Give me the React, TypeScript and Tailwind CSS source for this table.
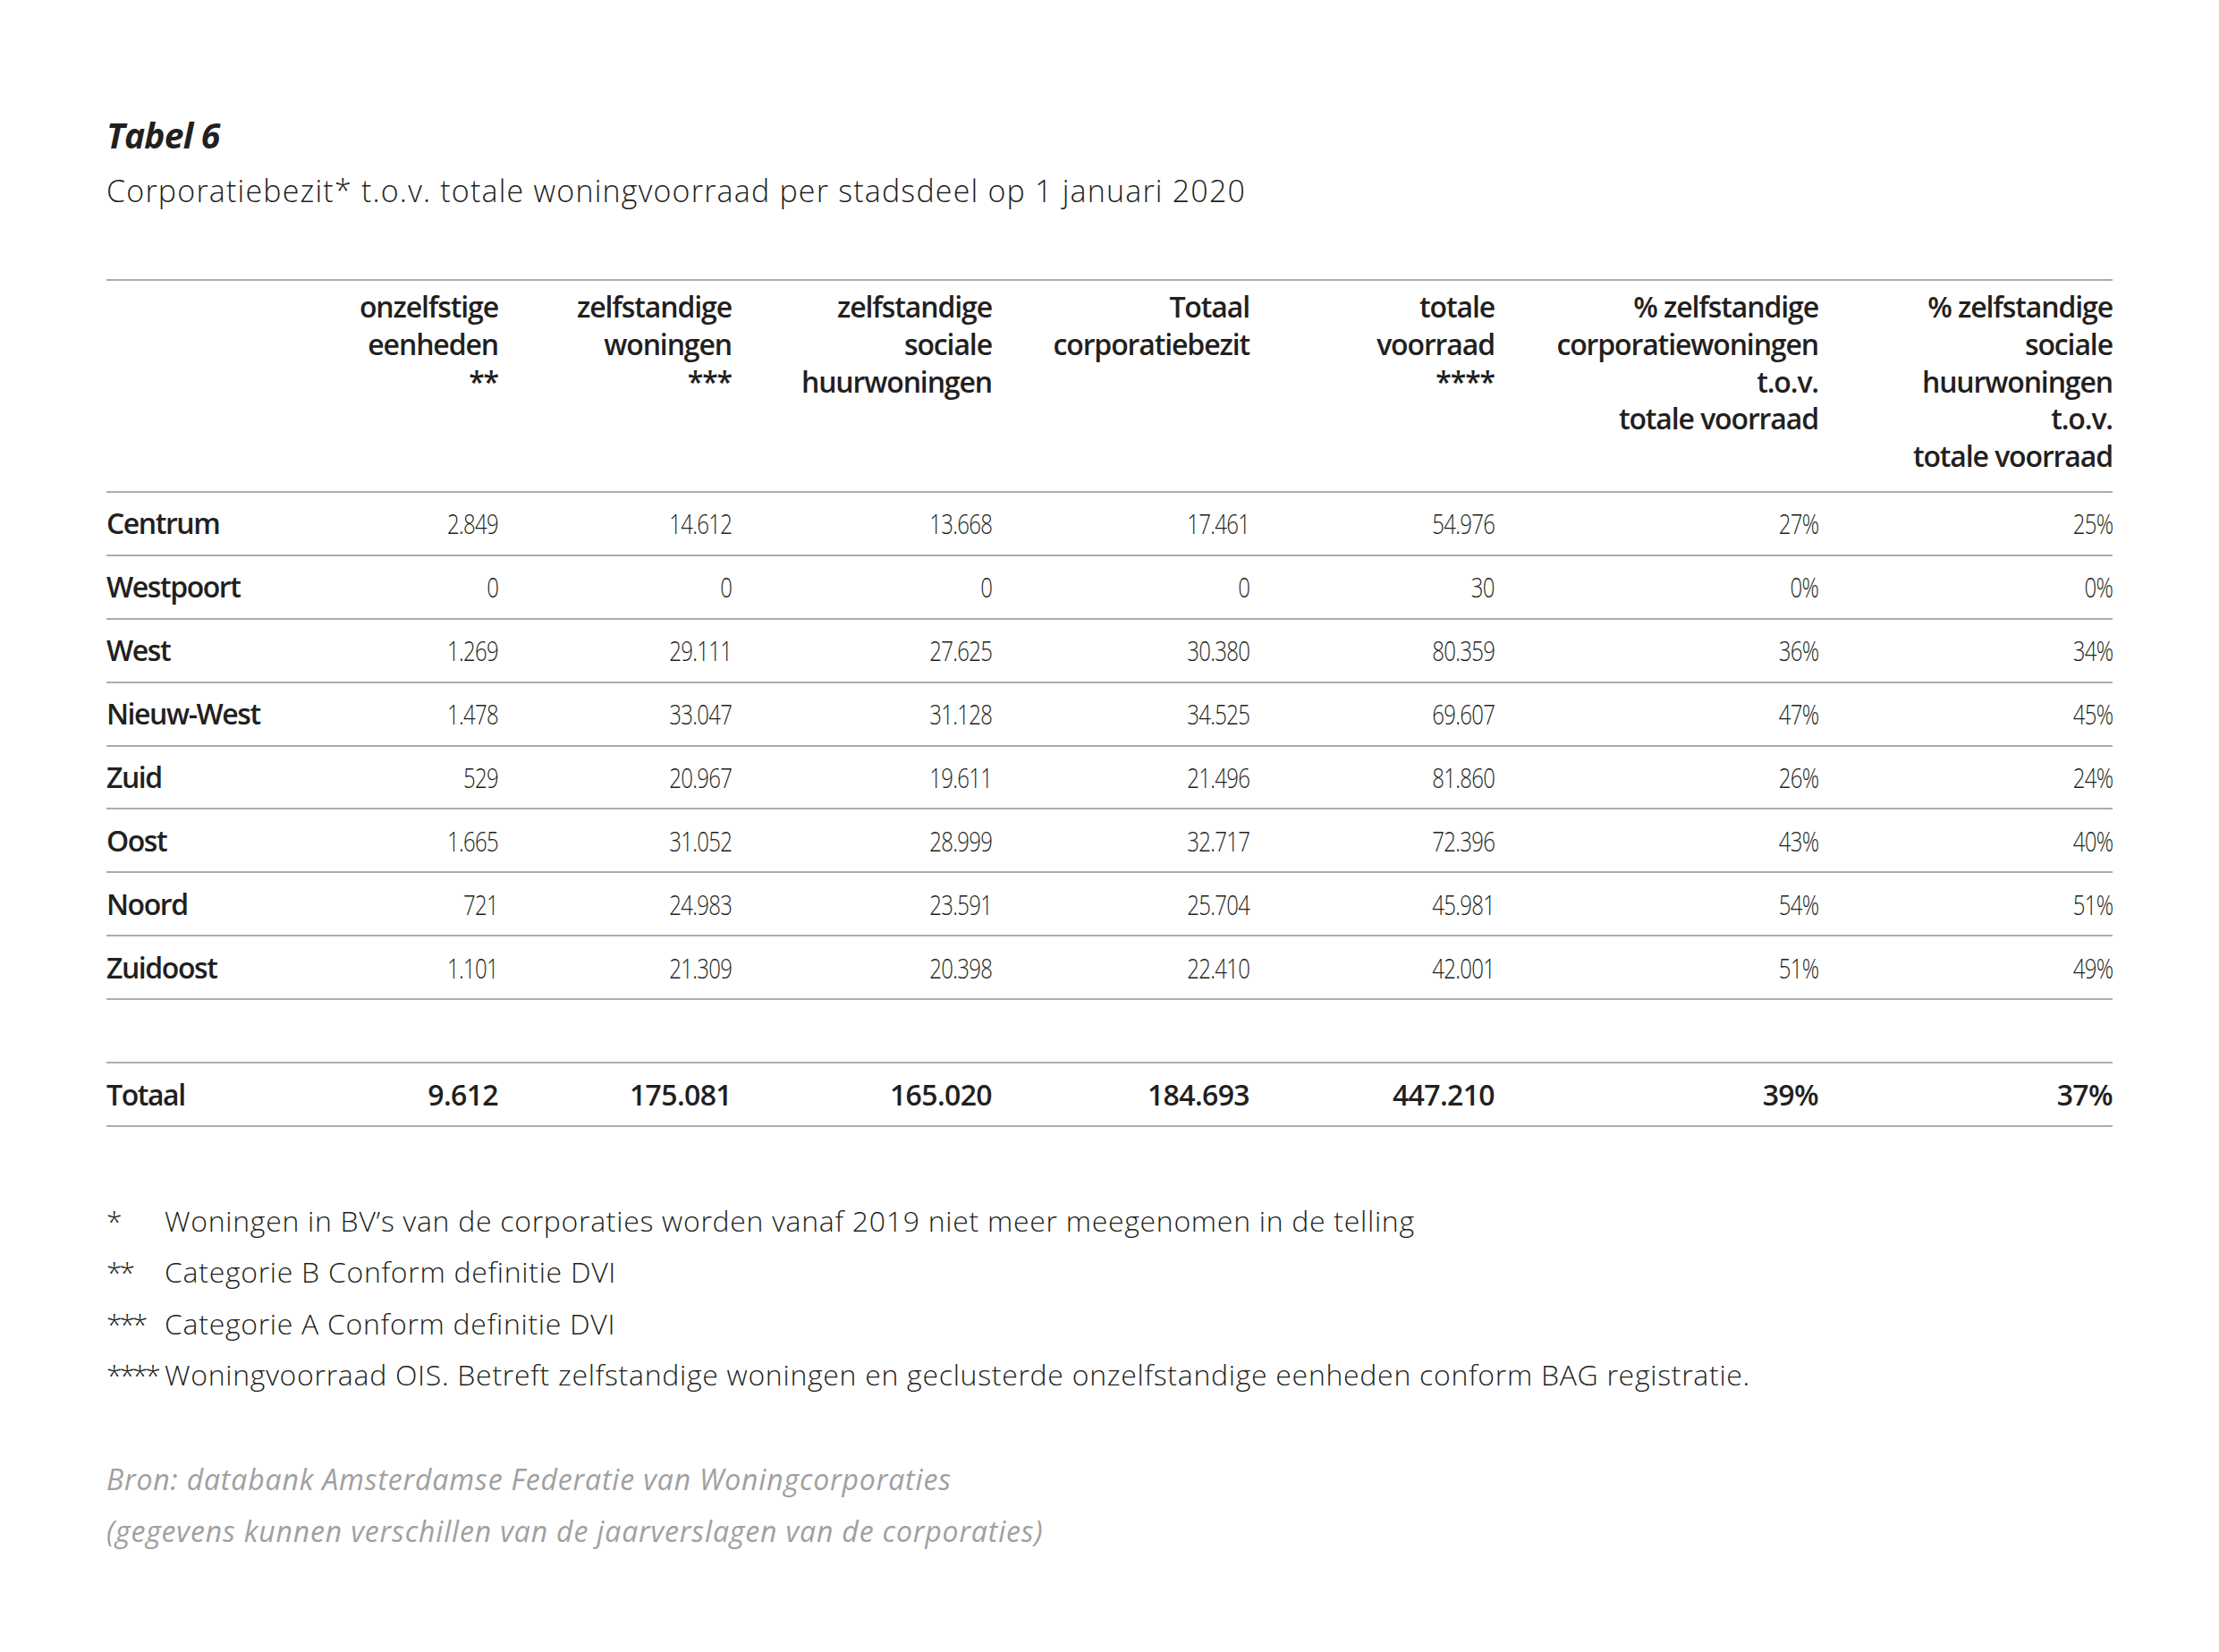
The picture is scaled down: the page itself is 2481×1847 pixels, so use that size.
const headers: string[][] = [
  [],
  ["onzelfstige", "eenheden", "**"],
  ["zelfstandige", "woningen", "***"],
  ["zelfstandige", "sociale", "huurwoningen"],
  ["Totaal", "corporatiebezit"],
  ["totale", "voorraad", "****"],
  ["% zelfstandige", "corporatiewoningen", "t.o.v.", "totale voorraad"],
  ["% zelfstandige", "sociale", "huurwoningen", "t.o.v.", "totale voorraad"],
];

const rows: string[][] = [
  ["Centrum", "2.849", "14.612", "13.668", "17.461", "54.976", "27%", "25%"],
  ["Westpoort", "0", "0", "0", "0", "30", "0%", "0%"],
  ["West", "1.269", "29.111", "27.625", "30.380", "80.359", "36%", "34%"],
  ["Nieuw-West", "1.478", "33.047", "31.128", "34.525", "69.607", "47%", "45%"],
  ["Zuid", "529", "20.967", "19.611", "21.496", "81.860", "26%", "24%"],
  ["Oost", "1.665", "31.052", "28.999", "32.717", "72.396", "43%", "40%"],
  ["Noord", "721", "24.983", "23.591", "25.704", "45.981", "54%", "51%"],
  ["Zuidoost", "1.101", "21.309", "20.398", "22.410", "42.001", "51%", "49%"],
];

const total = ["Totaal", "9.612", "175.081", "165.020", "184.693", "447.210", "39%", "37%"];

const footnotes = [
  ["*", "Woningen in BV’s van de corporaties worden vanaf 2019 niet meer meegenomen in de telling"],
  ["**", "Categorie B Conform definitie DVI"],
  ["***", "Categorie A Conform definitie DVI"],
  ["****", "Woningvoorraad OIS. Betreft zelfstandige woningen en geclusterde onzelfstandige eenheden conform BAG registratie."],
];

// column widths line up the right edges with the printed table
const cols = "grid grid-cols-[181px_257px_261px_291px_288px_274px_362px_329px]";

const App = () => {
  return (
    <div className="min-h-screen bg-white font-['Open_Sans',sans-serif] text-[#231f20]">
      <div className="pl-[119px] pt-[127px] w-[2362px]">
        {/* Title */}
        <h1 className="text-[39px] leading-[48px] font-bold italic tracking-[-0.02em]">Tabel 6</h1>
        <p className="mt-[14px] text-[34px] leading-[48px] font-light tracking-[0.035em] whitespace-nowrap">
          Corporatiebezit* t.o.v. totale woningvoorraad per stadsdeel op 1 januari 2020
        </p>

        {/* Table */}
        <div className="mt-[75px] border-t-2 border-[#acacac] text-[32px]">
          <div className={`${cols} h-[237px] border-b-2 border-[#acacac] pt-[8px] tracking-[-0.035em]`}>
            {headers.map((h, i) => (
              <div key={i} className="text-right font-semibold leading-[41.75px]">
                {h.map((line, j) => (
                  <div key={j}>{line}</div>
                ))}
              </div>
            ))}
          </div>

          {rows.map((r) => (
            <div key={r[0]} className={`${cols} h-[70.9px] border-b-2 border-[#acacac] items-center leading-[40px]`}>
              {r.map((cell, i) =>
                i === 0 ? (
                  <div key={i} className="font-semibold tracking-[-0.045em]">
                    {cell}
                  </div>
                ) : (
                  <div key={i} className="text-right font-light">
                    {/* printed figures are condensed */}
                    <span className="inline-block origin-right scale-x-[0.75] tracking-[-0.03em]">{cell}</span>
                  </div>
                )
              )}
            </div>
          ))}

          <div className="h-[70.9px] border-b-2 border-[#acacac]" />

          <div className={`${cols} h-[71px] border-b-2 border-[#acacac] items-center leading-[40px] font-semibold tracking-[-0.02em]`}>
            {total.map((cell, i) => (
              <div key={i} className={i === 0 ? "tracking-[-0.045em]" : "text-right"}>
                {cell}
              </div>
            ))}
          </div>
        </div>

        {/* Footnotes */}
        <div className="mt-[76px] text-[32px] leading-[57.3px] font-light">
          {footnotes.map(([mark, text]) => (
            <div key={mark} className="flex">
              <span className="w-[65px] shrink-0 whitespace-nowrap tracking-[-0.1em]">{mark}</span>
              <span className="whitespace-nowrap tracking-[0.022em]">{text}</span>
            </div>
          ))}
        </div>

        <div className="mt-[60px] text-[32px] leading-[57.3px] italic text-[#a0a0a0] tracking-[0.026em]">
          <p>Bron: databank Amsterdamse Federatie van Woningcorporaties</p>
          <p>(gegevens kunnen verschillen van de jaarverslagen van de corporaties)</p>
        </div>
      </div>
    </div>
  );
};

export default App;
